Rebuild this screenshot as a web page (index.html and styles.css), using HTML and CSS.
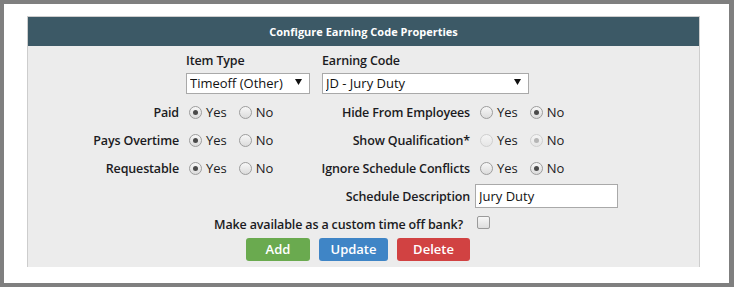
FILE: index.html
```html
<!DOCTYPE html>
<html lang="en">
<head>
<meta charset="utf-8">
<title>Configure Earning Code Properties</title>
<link rel="stylesheet" href="styles.css">
</head>
<body>
<div class="frame">
  <div class="panel">
    <div class="panel-title">Configure Earning Code Properties</div>
    <div class="panel-body">
      <div class="top-row">
        <div class="field">
          <label class="field-label" for="itemType">Item Type</label>
          <div class="select-wrap select-type">
            <select id="itemType" class="select">
              <option>Timeoff (Other)</option>
            </select>
            <svg class="select-arrow" width="7" height="6" viewBox="0 0 7 6"><polygon points="0,0 7,0 3.5,6" fill="#111"/></svg>
          </div>
        </div>
        <div class="field">
          <label class="field-label" for="earnCode">Earning Code</label>
          <div class="select-wrap select-code">
            <select id="earnCode" class="select">
              <option>JD - Jury Duty</option>
            </select>
            <svg class="select-arrow" width="7" height="6" viewBox="0 0 7 6"><polygon points="0,0 7,0 3.5,6" fill="#111"/></svg>
          </div>
        </div>
      </div>

      <div class="form-grid">
        <div class="lbl">Paid</div>
        <div class="radios">
          <span class="opt"><span class="radio checked"></span>Yes</span>
          <span class="opt"><span class="radio"></span>No</span>
        </div>
        <div class="lbl">Hide From Employees</div>
        <div class="radios">
          <span class="opt"><span class="radio"></span>Yes</span>
          <span class="opt"><span class="radio checked"></span>No</span>
        </div>

        <div class="lbl">Pays Overtime</div>
        <div class="radios">
          <span class="opt"><span class="radio checked"></span>Yes</span>
          <span class="opt"><span class="radio"></span>No</span>
        </div>
        <div class="lbl">Show Qualification*</div>
        <div class="radios">
          <span class="opt"><span class="radio disabled"></span>Yes</span>
          <span class="opt"><span class="radio disabled checked"></span>No</span>
        </div>

        <div class="lbl">Requestable</div>
        <div class="radios">
          <span class="opt"><span class="radio checked"></span>Yes</span>
          <span class="opt"><span class="radio"></span>No</span>
        </div>
        <div class="lbl">Ignore Schedule Conflicts</div>
        <div class="radios">
          <span class="opt"><span class="radio"></span>Yes</span>
          <span class="opt"><span class="radio checked"></span>No</span>
        </div>

        <div class="lbl lbl-col3">Schedule Description</div>
        <div class="input-cell"><input class="text-input" type="text" value="Jury Duty"></div>

        <div class="lbl lbl-wide">Make available as a custom time off bank?</div>
        <div class="check-cell"><span class="checkbox"></span></div>
      </div>

      <div class="buttons">
        <button class="btn btn-add">Add</button>
        <button class="btn btn-update">Update</button>
        <button class="btn btn-delete">Delete</button>
      </div>
    </div>
  </div>
</div>
</body>
</html>
```

FILE: styles.css
```css
html, body {
  margin: 0;
  padding: 0;
}

body {
  background: #7f7f7f;
  font-family: "Open Sans", "Liberation Sans", sans-serif;
  color: #1b1b22;
  height: 287px;
  overflow: hidden;
}

.frame {
  margin: 4px 5px 0 4px;
  background: #ffffff;
  padding: 12px 29px 16px 23px;
}

.panel {
  border: 1px solid #cdcdcd;
  border-bottom: none;
  background: #ececec;
}

.panel-title {
  height: 29px;
  line-height: 29px;
  background: #3c5966;
  color: #ffffff;
  font-size: 11px;
  font-weight: 700;
  text-align: center;
}

.panel-body {
  padding: 7px 0 6px 0;
}

.top-row {
  display: flex;
  gap: 12px;
  padding-left: 158px;
}

.field {
  display: flex;
  flex-direction: column;
}

.field-label {
  font-size: 12.5px;
  letter-spacing: -0.15px;
  font-weight: 600;
  line-height: 16px;
  margin-bottom: 2px;
}

.select-wrap {
  position: relative;
  height: 21px;
}

.select-type { width: 124px; }
.select-code { width: 207px; }

.select {
  appearance: none;
  -webkit-appearance: none;
  width: 100%;
  height: 21px;
  box-sizing: border-box;
  border: 1px solid #a9a9a9;
  border-radius: 0;
  background: #ffffff;
  font-family: "Open Sans", "Liberation Sans", sans-serif;
  font-size: 13px;
  color: #111;
  padding: 0 0 0 3px;
  margin: 0;
  line-height: 19px;
}

.select-arrow {
  position: absolute;
  right: 8px;
  top: 8px;
  pointer-events: none;
}

.form-grid {
  display: grid;
  grid-template-columns: 151px 121px 170px 1fr;
  grid-auto-rows: 28px;
  margin-top: 6px;
  align-items: center;
}

.lbl {
  font-size: 12.5px;
  letter-spacing: -0.15px;
  font-weight: 600;
  text-align: right;
  white-space: nowrap;
}

.lbl-col3 {
  grid-column: 3;
}

.lbl-wide {
  grid-column: 1 / 4;
  padding-right: 7px;
}

.radios {
  display: flex;
  align-items: center;
  gap: 12px;
  padding-left: 10px;
  font-size: 13px;
}

.opt {
  display: inline-flex;
  align-items: center;
  gap: 4px;
}

.radio {
  width: 13px;
  height: 13px;
  box-sizing: border-box;
  border-radius: 50%;
  border: 1px solid #9d9d9d;
  background: linear-gradient(#f7f7f7, #dcdcdc);
  display: inline-flex;
  align-items: center;
  justify-content: center;
}

.radio.checked::after {
  content: "";
  width: 5px;
  height: 5px;
  border-radius: 50%;
  background: #4a4a4a;
}

.radio.disabled {
  border-color: #cfcfcf;
  background: linear-gradient(#f4f4f4, #e6e6e6);
}

.radio.disabled.checked::after {
  background: #b5b5b5;
}

.input-cell {
  padding-left: 5px;
}

.text-input {
  width: 143px;
  height: 24px;
  box-sizing: border-box;
  border: 1px solid #a9a9a9;
  background: #ffffff;
  font-family: "Open Sans", "Liberation Sans", sans-serif;
  font-size: 13px;
  color: #111;
  padding: 0 3px;
  margin: 0;
  display: block;
}

.check-cell {
  padding-left: 7px;
  align-self: start;
  padding-top: 6px;
}

.checkbox {
  display: block;
  width: 13px;
  height: 13px;
  box-sizing: border-box;
  border: 1px solid #9a9a9a;
  border-radius: 2px;
  background: linear-gradient(#f7f7f7, #dedede);
}

.buttons {
  display: flex;
  gap: 9px;
  padding-left: 218px;
}

.btn {
  height: 23px;
  border: none;
  border-radius: 3px;
  color: #ffffff;
  font-family: "Open Sans", "Liberation Sans", sans-serif;
  font-size: 13px;
  font-weight: 600;
  padding: 0;
  margin: 0;
  line-height: 23px;
}

.btn-add {
  width: 64px;
  background: #6aaa4f;
}

.btn-update {
  width: 69px;
  background: #3f85c6;
}

.btn-delete {
  width: 73px;
  background: #d14242;
}
```
